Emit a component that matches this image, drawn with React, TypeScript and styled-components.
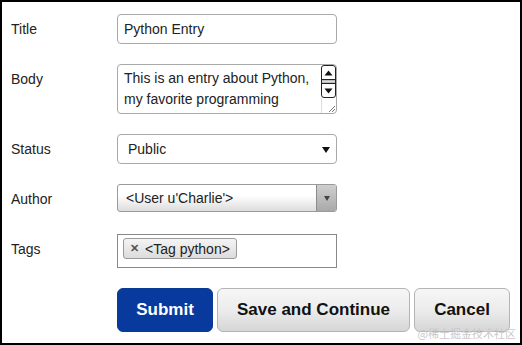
import * as React from 'react';
import styled, { createGlobalStyle } from 'styled-components';

const GlobalStyle = createGlobalStyle`
    html, body {
        margin: 0;
        padding: 0;
        background: #fff;
    }
    body {
        font-family: 'Liberation Sans', Arial, sans-serif;
        color: #222;
    }
`;

const Frame = styled.div`
    position: relative;
    box-sizing: border-box;
    width: 522px;
    height: 345px;
    border: 2px solid #000;
    background: #fff;
    padding: 12px 0 0 9px;
    display: flex;
    flex-direction: column;
    gap: 20px;
`;

const Row = styled.div`
    display: flex;
    align-items: flex-start;
`;

const Label = styled.label`
    width: 106px;
    flex: none;
    font-size: 14px;
    line-height: 30px;
    color: #222;
`;

const Field = styled.div<{ $h: number; $pad?: number }>`
    box-sizing: border-box;
    width: 220px;
    height: ${(p) => p.$h}px;
    border: 1px solid #a9a9a9;
    border-radius: 4px;
    background: #fff;
    padding-left: ${(p) => p.$pad ?? 6}px;
    font-size: 14px;
    display: flex;
    align-items: center;
    position: relative;
`;

const AreaBox = styled.div`
    box-sizing: border-box;
    width: 220px;
    height: 50px;
    border: 1px solid #a9a9a9;
    border-radius: 4px;
    display: flex;
    overflow: hidden;
`;

const AreaText = styled.div`
    flex: 1;
    padding: 3px 0 0 6px;
    font-size: 14px;
    line-height: 21px;
`;

const ScrollCol = styled.div`
    width: 15px;
    flex: none;
    display: flex;
    flex-direction: column;
`;

const ScrollButtons = styled.div`
    box-sizing: border-box;
    height: 33px;
    border: 1px solid #222;
    border-radius: 3px;
    display: flex;
    flex-direction: column;
    background: #fff;
`;

const ScrollArrow = styled.div`
    flex: 1;
    display: flex;
    align-items: center;
    justify-content: center;
`;

const ScrollThumb = styled.div`
    height: 3px;
    background: repeating-linear-gradient(#bbb 0 1px, #ddd 1px 2px);
    border-top: 1px solid #222;
    border-bottom: 1px solid #222;
`;

const Grip = styled.div`
    flex: 1;
    border-left: 1px solid #ddd;
    display: flex;
    align-items: flex-end;
    justify-content: flex-end;
`;

const SelectArrow = styled.span`
    position: absolute;
    right: 6px;
    top: 12px;
    width: 0;
    height: 0;
    border-left: 4px solid transparent;
    border-right: 4px solid transparent;
    border-top: 6px solid #111;
`;

const ComboBox = styled.div`
    box-sizing: border-box;
    width: 220px;
    height: 28px;
    border: 1px solid #9a9a9a;
    border-radius: 3px;
    display: flex;
    overflow: hidden;
    background: linear-gradient(#fff 0%, #fff 40%, #dcdcdc 100%);
    font-size: 14px;
`;

const ComboText = styled.div`
    flex: 1;
    padding-left: 8px;
    display: flex;
    align-items: center;
`;

const ComboButton = styled.div`
    width: 19px;
    flex: none;
    border-left: 1px solid #8c8c8c;
    background: linear-gradient(#cfcfcf, #a9a9a9);
    display: flex;
    align-items: center;
    justify-content: center;
`;

const SmallTri = styled.span`
    width: 0;
    height: 0;
    border-left: 3px solid transparent;
    border-right: 3px solid transparent;
    border-top: 5px solid #444;
`;

const TagBox = styled.div`
    box-sizing: border-box;
    width: 220px;
    height: 34px;
    border: 1px solid #888;
    padding: 3px 5px;
`;

const Chip = styled.span`
    box-sizing: border-box;
    display: inline-flex;
    align-items: center;
    height: 21px;
    padding: 0 6px 0 6px;
    border: 1px solid #9a9a9a;
    border-radius: 3px;
    background: linear-gradient(#f4f4f4, #dcdcdc);
    font-size: 14px;
    color: #222;
`;

const ChipX = styled.span`
    font-size: 11px;
    font-weight: bold;
    color: #555;
    margin-right: 6px;
`;

const Actions = styled.div`
    display: flex;
    gap: 4px;
    margin-left: 106px;
`;

const Button = styled.button<{ $w: number; $primary?: boolean }>`
    box-sizing: border-box;
    width: ${(p) => p.$w}px;
    height: 44px;
    border-radius: 6px;
    border: 1px solid ${(p) => (p.$primary ? '#0b3a94' : '#b4b4b4')};
    background: ${(p) =>
        p.$primary ? '#073a9c' : 'linear-gradient(#f6f6f6 0%, #ececec 50%, #d6d6d6 100%)'};
    color: ${(p) => (p.$primary ? '#fff' : '#111')};
    font-family: 'Liberation Sans', Arial, sans-serif;
    font-size: 17px;
    font-weight: bold;
    padding: 0;
`;

const Watermark = styled.div`
    position: absolute;
    right: 4px;
    bottom: 2px;
    font-family: 'Noto Sans CJK SC', sans-serif;
    font-size: 11px;
    color: #c9c9c9;
`;

export default function App() {
    return (
        <>
            <GlobalStyle />
            <Frame>
                <Row>
                    <Label>Title</Label>
                    <Field $h={30}>Python Entry</Field>
                </Row>
                <Row>
                    <Label>Body</Label>
                    <AreaBox>
                        <AreaText>This is an entry about Python, my favorite programming</AreaText>
                        <ScrollCol>
                            <ScrollButtons>
                                <ScrollArrow>
                                    <svg width="9" height="6" viewBox="0 0 9 6">
                                        <path d="M0.5 5.5 L4.5 0.5 L8.5 5.5 Z" fill="#111" />
                                    </svg>
                                </ScrollArrow>
                                <ScrollThumb />
                                <ScrollArrow>
                                    <svg width="9" height="6" viewBox="0 0 9 6">
                                        <path d="M0.5 0.5 L4.5 5.5 L8.5 0.5 Z" fill="#111" />
                                    </svg>
                                </ScrollArrow>
                            </ScrollButtons>
                            <Grip>
                                <svg width="10" height="10" viewBox="0 0 10 10">
                                    <path d="M9 3 L3 9 M9 6 L6 9" stroke="#777" strokeWidth="1" />
                                </svg>
                            </Grip>
                        </ScrollCol>
                    </AreaBox>
                </Row>
                <Row>
                    <Label>Status</Label>
                    <Field $h={30} $pad={10}>
                        Public
                        <SelectArrow />
                    </Field>
                </Row>
                <Row>
                    <Label>Author</Label>
                    <ComboBox>
                        <ComboText>&lt;User u'Charlie'&gt;</ComboText>
                        <ComboButton>
                            <SmallTri />
                        </ComboButton>
                    </ComboBox>
                </Row>
                <Row>
                    <Label>Tags</Label>
                    <TagBox>
                        <Chip>
                            <ChipX>✕</ChipX>&lt;Tag python&gt;
                        </Chip>
                    </TagBox>
                </Row>
                <Actions>
                    <Button $w={96} $primary>
                        Submit
                    </Button>
                    <Button $w={193}>Save and Continue</Button>
                    <Button $w={96}>Cancel</Button>
                </Actions>
                <Watermark>@稀土掘金技术社区</Watermark>
            </Frame>
        </>
    );
}
